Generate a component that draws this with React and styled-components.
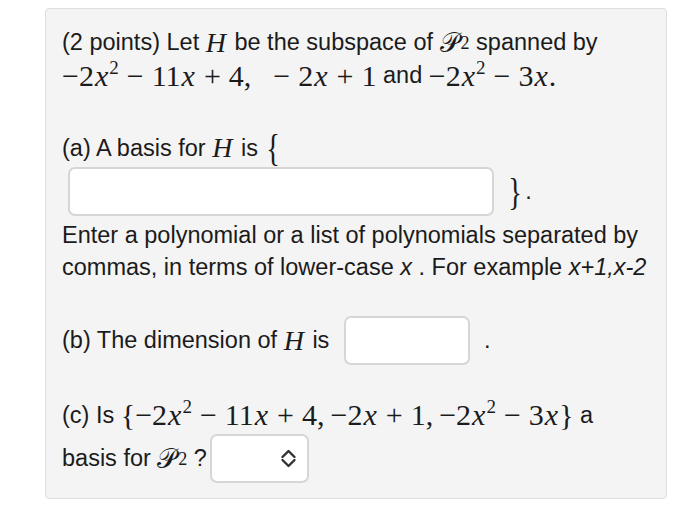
import React from 'react'
import styled, { createGlobalStyle } from 'styled-components'

const Global = createGlobalStyle`
  html, body {
    margin: 0;
    padding: 0;
    background: #ffffff;
  }
  body {
    font-family: "Liberation Sans", Arial, sans-serif;
    color: #1b1b1b;
  }
`

const Page = styled.div`
  padding: 8px 0 10px 45px;
`

const Panel = styled.div`
  box-sizing: border-box;
  width: 622px;
  height: 491px;
  background: #f4f4f4;
  border: 1px solid #dedede;
  border-radius: 4px;
  padding: 17px 16px 0 16px;
  font-size: 23.5px;
`

const Line = styled.div`
  display: flex;
  align-items: center;
  white-space: nowrap;
  height: ${(p) => p.lh || 33}px;
  line-height: ${(p) => p.lh || 33}px;
  margin-top: ${(p) => p.mt || 0}px;
`

const Para = styled.p`
  margin: ${(p) => p.mt || 0}px 0 0 0;
  line-height: 32px;
`

const M = styled.span`
  font-family: "Liberation Serif", "Times New Roman", serif;
  font-size: 30px;
`

const V = styled.i`
  font-family: "Liberation Serif", "Times New Roman", serif;
  font-style: italic;
  font-size: ${(p) => p.size || 30}px;
  padding: ${(p) => p.pad || '0 1px'};
`

const Op = styled.span`
  padding: 0 8px;
`

const Sup = styled.sup`
  font-size: 19px;
  vertical-align: 12px;
  line-height: 0;
`

const Sub = styled.sub`
  font-size: 18px;
  vertical-align: -7px;
  line-height: 0;
  font-family: "Liberation Serif", "Times New Roman", serif;
`

const Cal = styled.span`
  font-family: "DejaVu Serif", "Liberation Serif", serif;
  font-size: 27px;
  margin-right: 2px;
`

const Gap = styled.span`
  display: inline-block;
  width: ${(p) => p.w}px;
`

const Brace = styled.span`
  font-family: "Liberation Serif", "Times New Roman", serif;
  font-size: ${(p) => p.size || 38}px;
  line-height: 1;
  display: inline-block;
  transform: scaleX(0.75);
  margin: ${(p) => p.m || '0'};
`

const TextInput = styled.div`
  box-sizing: border-box;
  width: ${(p) => p.w}px;
  height: 49px;
  background: #ffffff;
  border: 2px solid #d6d6d6;
  border-radius: 7px;
  flex: none;
  margin: ${(p) => p.m || '0'};
`

const Select = styled.div`
  box-sizing: border-box;
  width: 99px;
  height: 49px;
  background: #ffffff;
  border: 2px solid #d6d6d6;
  border-radius: 7px;
  display: flex;
  align-items: center;
  justify-content: flex-end;
  padding-right: 10px;
  margin-left: 3px;
`

const Dot = styled.span`
  margin-left: ${(p) => p.ml || 0}px;
`

const Chevrons = () => (
  <svg width="17" height="19" viewBox="0 0 17 19" fill="none" stroke="#333" strokeWidth="2.4" strokeLinecap="round" strokeLinejoin="round">
    <polyline points="2.5,8 8.5,2 14.5,8" />
    <polyline points="2.5,11 8.5,17 14.5,11" />
  </svg>
)

const P2 = () => (
  <>
    <Cal>𝒫</Cal>
    <Sub>2</Sub>
  </>
)

const Minus = () => <Op>−</Op>
const Plus = () => <Op>+</Op>

export default function App() {
  return (
    <>
      <Global />
      <Page>
        <Panel>
          <Line>
            (2 points) Let&nbsp;<V size={28} pad="0 2px 0 0">H</V>&nbsp;be the subspace of&nbsp;<P2 />&nbsp;spanned by
          </Line>
          <Line>
            <M>
              −2<V>x</V><Sup>2</Sup><Minus />11<V>x</V><Plus />4,<Gap w={14} /><Minus />2<V>x</V><Plus />1
            </M>
            &nbsp;and&nbsp;
            <M>
              −2<V>x</V><Sup>2</Sup><Minus />3<V>x</V>.
            </M>
          </Line>

          <Line mt={40} lh={32}>
            (a) A basis for&nbsp;<V size={28} pad="0 2px 0 0">H</V>&nbsp;is&nbsp;<Brace>{'{'}</Brace>
          </Line>
          <Line lh={49} mt={3}>
            <TextInput w={426} m="0 0 0 6px" />
            <Brace m="0 0 0 12px">{'}'}</Brace>
            <Dot ml={1}>.</Dot>
          </Line>
          <Para mt={3}>
            Enter a polynomial or a list of polynomials separated by
            <br />
            commas, in terms of lower-case <i>x</i> . For example <i>x+1,x-2</i>
          </Para>

          <Line mt={33} lh={49}>
            (b) The dimension of&nbsp;<V size={28} pad="0 2px 0 0">H</V>&nbsp;is&nbsp;
            <TextInput w={126} m="0 0 0 8px" />
            <Dot ml={14}>.</Dot>
          </Line>

          <Line mt={34} lh={32}>
            (c) Is&nbsp;
            <M>
              {'{'}−2<V>x</V><Sup>2</Sup><Minus />11<V>x</V><Plus />4,<Gap w={6} />−2<V>x</V><Plus />1,<Gap w={6} />−2<V>x</V><Sup>2</Sup><Minus />3<V>x</V>{'}'}
            </M>
            &nbsp;a
          </Line>
          <Line lh={49} mt={3}>
            basis for&nbsp;<P2 />&nbsp;?
            <Select>
              <Chevrons />
            </Select>
          </Line>
        </Panel>
      </Page>
    </>
  )
}
